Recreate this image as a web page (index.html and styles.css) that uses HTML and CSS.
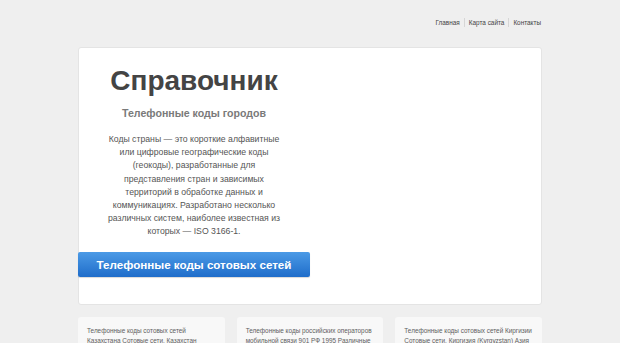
FILE: index.html
```html
<!DOCTYPE html>
<html>
<head>
<meta charset="utf-8" />
<title>Справочник</title>
<link rel="stylesheet" href="styles.css">
</head>
<body>
	<div class="wrap">
		<div class="top">
			<ul class="menu">
				<li><a>Главная</a></li>
				<li><a>Карта сайта</a></li>
				<li><a>Контакты</a></li>
			</ul>
		</div>

		<div class="main_box">
			<div class="main_left">
				<h1>Справочник</h1>
				<h2>Телефонные коды городов</h2>
				<p>Коды страны — это короткие алфавитные или цифровые географические коды (геокоды), разработанные для представления стран и зависимых территорий в обработке данных и коммуникациях. Разработано несколько различных систем, наиболее известная из которых — ISO 3166-1.</p>
				<a class="big_btn">Телефонные коды сотовых сетей</a>
			</div>
		</div>

		<div class="items">
			<div class="item">Телефонные коды сотовых сетей Казахстана Сотовые сети, Казахстан (Kazakhstan) Азия</div>
			<div class="item">Телефонные коды российских операторов мобильной связи 901 РФ 1995 Различные операторы</div>
			<div class="item">Телефонные коды сотовых сетей Киргизии Сотовые сети, Киргизия (Kyrgyzstan) Азия</div>
		</div>
	</div>
</body>
</html>
```
FILE: styles.css
```css
html, body, div, p, h1, h2, ul, li {
	padding: 0;
	margin: 0;
}

body {
	background: #efefef;
	font-family: "Liberation Sans", Arial, sans-serif;
	color: #444;
}

a {
	cursor: pointer;
}

li {
	list-style: none;
}

.wrap {
	width: 464px;
	margin: 0 auto;
}

/*верх*/
.top {
	height: 47px;
	display: flex;
	justify-content: flex-end;
}

.menu {
	display: flex;
	margin-top: 18px;
	height: 9px;
}

.menu li {
	font-size: 6.4px;
	line-height: 9px;
	padding: 0 4px;
	border-left: 1px solid #d6d6d6;
}

.menu li:first-child {
	border-left: 0;
}

.menu li:last-child {
	padding-right: 1px;
}

/*главный блок*/
.main_box {
	height: 258px;
	box-sizing: border-box;
	background: #fff;
	border: 1px solid #e4e4e4;
	border-radius: 3px;
}

.main_left {
	width: 232px;
	margin-left: -1px;
	text-align: center;
	padding-top: 15px;
}

.main_left h1 {
	font-size: 28px;
	line-height: 36px;
	color: #444;
	font-weight: bold;
}

.main_left h2 {
	font-size: 10.6px;
	line-height: 16px;
	color: #7a7a7a;
	margin-top: 6px;
}

.main_left p {
	font-size: 8.7px;
	line-height: 13.2px;
	color: #555;
	width: 180px;
	margin: 12px auto 0 auto;
}

.big_btn {
	display: block;
	margin-top: 13px;
	height: 25px;
	line-height: 25px;
	font-size: 11.6px;
	font-weight: bold;
	color: #fff;
	background: linear-gradient(#4b9ae6, #1f6dca);
	border-radius: 2px;
	box-shadow: 0 1px 1px rgba(0, 0, 0, 0.15);
}

/*нижние блоки*/
.items {
	display: grid;
	grid-template-columns: 1fr 1fr 1fr;
	gap: 12px;
	margin-top: 12px;
}

.item {
	background: #f8f8f8;
	border-radius: 3px;
	padding: 9px 9px 0 9px;
	font-size: 6.4px;
	line-height: 9.5px;
	color: #606060;
	height: 40px;
}
```
